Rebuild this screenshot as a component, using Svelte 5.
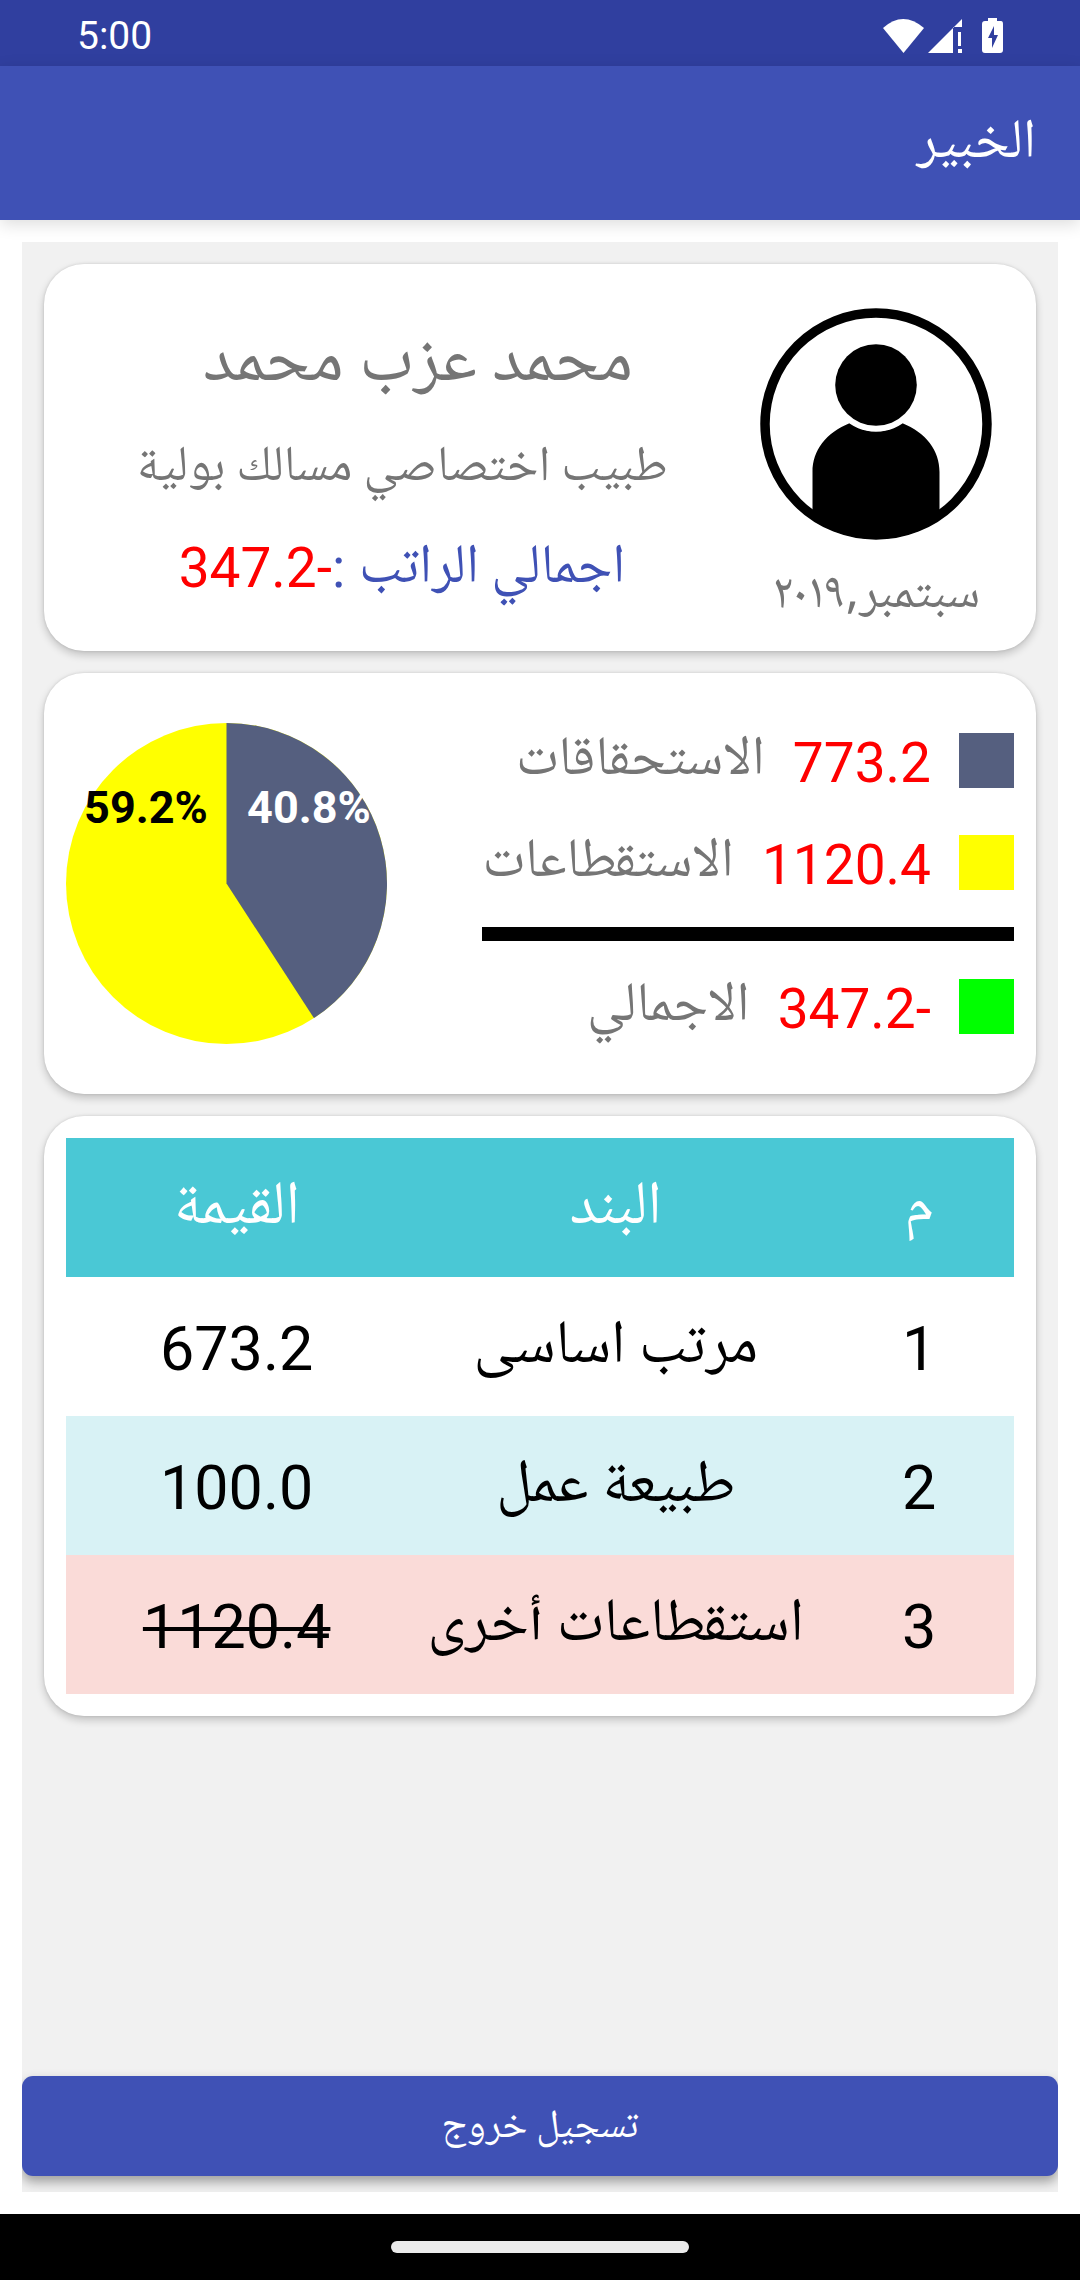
<script>
  const legend = [
    { label: 'الاستحقاقات', value: '773.2', tone: 'slate' },
    { label: 'الاستقطاعات', value: '1120.4', tone: 'yellow' }
  ];
  const total = { label: 'الاجمالي', value: '-347.2', tone: 'green' };

  const rows = [
    { id: 1, item: 'مرتب اساسى', value: '673.2', kind: 'plain' },
    { id: 2, item: 'طبيعة عمل', value: '100.0', kind: 'tinted' },
    { id: 3, item: 'استقطاعات أخرى', value: '1120.4', kind: 'deduction' }
  ];

  // End point of the first slice on the pie's circle.
  const radius = 160.5;
  const share = 773.2 / (773.2 + 1120.4);
  const angle = share * 2 * Math.PI;
  const endX = radius + radius * Math.sin(angle);
  const endY = radius - radius * Math.cos(angle);
</script>

{#snippet legendRow(entry)}
  <div class="legend-row">
    <span class="swatch {entry.tone}"></span>
    <span class="amount">{entry.value}</span>
    <span class="legend-label arabic">{entry.label}</span>
  </div>
{/snippet}

<div class="screen" dir="rtl" lang="ar">
  <div class="status" dir="ltr">
    <span>5:00</span>
    <svg class="status-icons" viewBox="0 0 120 36" aria-hidden="true">
      <path fill="#fff" d="M0 10Q20 -8 41 10L20.500 35Z" />
      <path fill="#fff" d="M45 35L79 1V9H70V35ZM75 14H78V28H75ZM75 31H79V35H75Z" />
      <path fill="#fff" fill-rule="evenodd" d="M105 0H114V3H118Q120 3 120 6V32Q120 35 117 35H102Q99 35 99 32V6Q99 3 102 3H105ZM111 8L105 20H109V30L115 17H111Z" />
    </svg>
  </div>

  <header class="app-bar">
    <h1 class="arabic">الخبير</h1>
  </header>

  <main>
    <div class="panel">
      <section class="card profile">
        <div class="identity">
          <svg class="avatar" viewBox="0 0 232 232" aria-hidden="true">
            <defs>
              <clipPath id="disc"><circle cx="116" cy="116" r="115" /></clipPath>
            </defs>
            <circle cx="116" cy="116" r="111" fill="#fff" stroke="#000" stroke-width="9.500" />
            <path clip-path="url(#disc)" d="M52.500 232V164C52.500 142 66 125 90 115Q116 132 142 115C166 125 179.500 142 179.500 164V232Z" />
            <circle cx="116" cy="77" r="43.500" fill="none" stroke="#fff" stroke-width="6" />
            <circle cx="116" cy="77" r="40.800" />
          </svg>
          <span class="month arabic">سبتمبر,٢٠١٩</span>
        </div>
        <div class="details">
          <h2 class="arabic">محمد عزب محمد</h2>
          <p class="job arabic">طبيب اختصاصي مسالك بولية</p>
          <p class="salary">
            <span class="arabic">اجمالي الراتب</span>
            <span class="colon">{' :'}</span>
            <span class="negative">-347.2</span>
          </p>
        </div>
      </section>

      <section class="card summary">
        <div class="legend">
          {#each legend as entry}
            {@render legendRow(entry)}
          {/each}
          <hr />
          {@render legendRow(total)}
        </div>
        <svg class="pie" viewBox="0 0 321 321" direction="ltr" role="img" aria-label="59.2% / 40.8%">
          <circle cx={radius} cy={radius} r={radius} fill="#ff0" />
          <path d="M{radius} {radius}V0A{radius} {radius} 0 0 1 {endX} {endY}Z" fill="#555f7f" />
          <text x="80" y="100" fill="#000">59.2%</text>
          <text x="243" y="100" fill="#fff">40.8%</text>
        </svg>
      </section>

      <section class="card">
        <table>
          <thead>
            <tr>
              <th class="col-id arabic" scope="col">م</th>
              <th class="col-item arabic" scope="col">البند</th>
              <th class="col-value arabic" scope="col">القيمة</th>
            </tr>
          </thead>
          <tbody>
            {#each rows as row}
              <tr class={row.kind}>
                <td class="number">{row.id}</td>
                <td class="arabic">{row.item}</td>
                <td class="number value">{row.value}</td>
              </tr>
            {/each}
          </tbody>
        </table>
      </section>

      <button type="button" class="logout arabic">تسجيل خروج</button>
    </div>
  </main>

  <div class="nav-bar"><span class="handle"></span></div>
</div>

<style>
  :global(body) {
    margin: 0;
  }

  .screen {
    display: flex;
    flex-direction: column;
    min-height: 100vh;
    background: #fff;
    font-family: Roboto, sans-serif;
    color: #757575;
  }

  .arabic {
    font-family: 'Noto Naskh Arabic UI', 'Noto Naskh Arabic', Roboto, 'DejaVu Sans', sans-serif;
  }

  h1,
  h2,
  p {
    margin: 0;
    font-weight: 400;
  }

  .status {
    display: flex;
    align-items: center;
    justify-content: space-between;
    box-sizing: border-box;
    height: 66px;
    padding: 6px 77px 0;
    background: #303f9f;
    color: #fff;
    font-size: 39px;
  }

  .status-icons {
    width: 120px;
    height: 36px;
  }

  .app-bar {
    display: flex;
    align-items: center;
    height: 154px;
    padding: 0 44px;
    background: #3f51b5;
    color: #fff;
    box-shadow: 0 4px 16px rgba(0, 0, 0, 0.14);
  }

  h1 {
    font-size: 55px;
    line-height: 84px;
  }

  main {
    display: flex;
    flex: 1;
    padding: 22px;
  }

  .panel {
    display: flex;
    flex: 1;
    flex-direction: column;
    gap: 22px;
    min-width: 0;
    padding: 22px 0 16px;
    overflow: hidden;
    background: #f1f1f1;
  }

  .card {
    margin: 0 22px;
    padding: 22px;
    border-radius: 40px;
    background: #fff;
    box-shadow: 0 4px 8px rgba(0, 0, 0, 0.2), 0 0 3px rgba(0, 0, 0, 0.12);
  }

  .profile {
    display: flex;
    gap: 22px;
    padding: 44px 44px 29px 22px;
  }

  .identity {
    display: flex;
    flex-direction: column;
    align-items: center;
    gap: 28px;
  }

  .avatar {
    width: 232px;
    height: 232px;
  }

  .month {
    font-size: 50px;
    line-height: 54px;
    white-space: nowrap;
  }

  .details {
    flex: 1;
    text-align: center;
  }

  h2 {
    padding-left: 32px;
    font-size: 70px;
    line-height: 108px;
  }

  .job {
    font-size: 50px;
    line-height: 104px;
  }

  .salary {
    display: flex;
    align-items: center;
    justify-content: center;
    color: #3f51b5;
    font-size: 55px;
    line-height: 96px;
  }

  .colon {
    white-space: pre;
  }

  .negative {
    color: #f00;
  }

  .summary {
    display: flex;
    align-items: center;
    justify-content: space-between;
    padding: 36px 22px 37px;
  }

  .pie {
    width: 321px;
    height: 321px;
    overflow: visible;
  }

  .pie text {
    font-size: 45px;
    font-weight: 700;
    text-anchor: middle;
  }

  .legend {
    width: 532px;
  }

  .legend-row {
    display: flex;
    align-items: center;
    gap: 28px;
    height: 102px;
    font-size: 55px;
    line-height: 84px;
  }

  .swatch {
    width: 55px;
    height: 55px;
  }

  .slate {
    background: #555f7f;
  }

  .yellow {
    background: #ff0;
  }

  .green {
    background: #0f0;
  }

  .amount {
    padding-top: 6px;
    color: #f00;
  }

  .legend-label {
    white-space: nowrap;
  }

  hr {
    height: 14px;
    margin: 14px 0;
    border: 0;
    background: #000;
  }

  table {
    width: 100%;
    border-collapse: collapse;
    table-layout: fixed;
    color: #000;
    font-size: 61px;
    line-height: 84px;
  }

  th,
  td {
    box-sizing: border-box;
    height: 139px;
    padding: 0;
    font-weight: 400;
    text-align: center;
    vertical-align: middle;
    white-space: nowrap;
  }

  .number {
    padding-top: 4px;
  }

  .col-id {
    width: 20%;
  }

  .col-item {
    width: 44%;
  }

  .col-value {
    width: 36%;
  }

  thead {
    background: #4ac8d5;
    color: #fff;
  }

  .tinted {
    background: #d8f2f5;
  }

  .deduction {
    background: #fadbd8;
  }

  .deduction .value {
    text-decoration: line-through;
    text-decoration-thickness: 4px;
  }

  .logout {
    height: 100px;
    margin-top: auto;
    padding: 0;
    border: 0;
    border-radius: 11px;
    background: #3f51b5;
    box-shadow: 0 6px 12px rgba(0, 0, 0, 0.35);
    color: #fff;
    font-size: 40px;
  }

  .nav-bar {
    display: flex;
    align-items: center;
    justify-content: center;
    height: 66px;
    background: #000;
  }

  .handle {
    width: 298px;
    height: 12px;
    border-radius: 6px;
    background: #ebebeb;
  }
</style>
